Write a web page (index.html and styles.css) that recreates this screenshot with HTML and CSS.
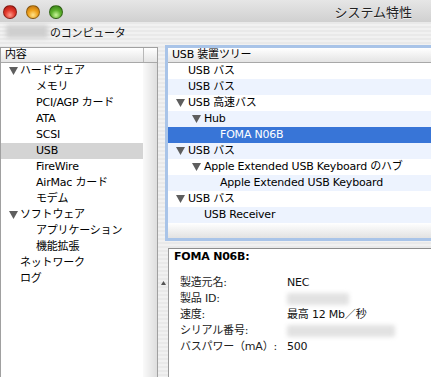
FILE: index.html
```html
<!DOCTYPE html>
<html lang="ja">
<head>
  <meta charset="UTF-8">
  <title>システム特性</title>
  <link rel="stylesheet" href="styles.css">
</head>
<body>
  <div class="window">
    <div class="titlebar">
      <div class="lights">
        <span class="light red"></span>
        <span class="light orange"></span>
        <span class="light green"></span>
      </div>
      <div class="title">システム特性</div>
    </div>
    <div class="toolbar">
      <span class="blur machine"></span>
      <span class="machine-label">のコンピュータ</span>
    </div>
    <div class="main">
      <div class="sidebar">
        <div class="side-head">
          <div class="side-col">内容</div>
          <div class="side-col2"></div>
        </div>
        <div class="side-body">
          <ul class="side-list">
            <li class="lv0"><span class="twisty"><svg width="9" height="8" viewBox="0 0 9 8"><path d="M0 0H9L4.5 8Z" fill="#5e5e5e"/></svg></span>ハードウェア</li>
            <li class="lv1">メモリ</li>
            <li class="lv1">PCI/AGP カード</li>
            <li class="lv1">ATA</li>
            <li class="lv1">SCSI</li>
            <li class="lv1 current">USB</li>
            <li class="lv1">FireWire</li>
            <li class="lv1">AirMac カード</li>
            <li class="lv1">モデム</li>
            <li class="lv0"><span class="twisty"><svg width="9" height="8" viewBox="0 0 9 8"><path d="M0 0H9L4.5 8Z" fill="#5e5e5e"/></svg></span>ソフトウェア</li>
            <li class="lv1">アプリケーション</li>
            <li class="lv1">機能拡張</li>
            <li class="lv0 leaf">ネットワーク</li>
            <li class="lv0 leaf">ログ</li>
          </ul>
          <div class="side-strip"></div>
        </div>
      </div>
      <div class="content">
        <div class="tree">
          <div class="tree-head">USB 装置ツリー</div>
          <ul class="tree-list">
            <li class="t0 leaf">USB バス</li>
            <li class="t0 leaf odd">USB バス</li>
            <li class="t0"><span class="twisty"><svg width="9" height="8" viewBox="0 0 9 8"><path d="M0 0H9L4.5 8Z" fill="#5e5e5e"/></svg></span>USB 高速バス</li>
            <li class="t1 odd"><span class="twisty"><svg width="9" height="8" viewBox="0 0 9 8"><path d="M0 0H9L4.5 8Z" fill="#5e5e5e"/></svg></span>Hub</li>
            <li class="t2 leaf selected">FOMA N06B</li>
            <li class="t0 odd"><span class="twisty"><svg width="9" height="8" viewBox="0 0 9 8"><path d="M0 0H9L4.5 8Z" fill="#5e5e5e"/></svg></span>USB バス</li>
            <li class="t1"><span class="twisty"><svg width="9" height="8" viewBox="0 0 9 8"><path d="M0 0H9L4.5 8Z" fill="#5e5e5e"/></svg></span>Apple Extended USB Keyboard のハブ</li>
            <li class="t2 leaf odd">Apple Extended USB Keyboard</li>
            <li class="t0"><span class="twisty"><svg width="9" height="8" viewBox="0 0 9 8"><path d="M0 0H9L4.5 8Z" fill="#5e5e5e"/></svg></span>USB バス</li>
            <li class="t1 leaf odd">USB Receiver</li>
          </ul>
          <div class="tree-fill"></div>
        </div>
        <div class="detail-row">
          <div class="grip"><svg width="5" height="4" viewBox="0 0 5 4"><path d="M0 4L2.5 0L5 4Z" fill="#555"/></svg></div>
          <div class="detail">
            <div class="detail-title">FOMA N06B:</div>
            <div class="props">
              <div class="prop"><span class="key">製造元名:</span><span class="val">NEC</span></div>
              <div class="prop"><span class="key">製品 ID:</span><span class="val"><span class="blur pid"></span></span></div>
              <div class="prop"><span class="key">速度:</span><span class="val">最高 12 Mb／秒</span></div>
              <div class="prop"><span class="key">シリアル番号:</span><span class="val"><span class="blur serial"></span></span></div>
              <div class="prop"><span class="key">バスパワー（mA）:</span><span class="val">500</span></div>
            </div>
          </div>
        </div>
      </div>
    </div>
  </div>
</body>
</html>
```

FILE: styles.css
```css
body {
  margin: 0;
  font-family: "DejaVu Sans", "Noto Sans CJK JP", sans-serif;
  font-size: 11px;
  letter-spacing: -0.2px;
  color: #000;
}
.window {
  width: 431px;
  height: 377px;
  overflow: hidden;
  display: flex;
  flex-direction: column;
  background: repeating-linear-gradient(#f1f1f1 0 2px, #e9e9e9 2px 4px);
}
.titlebar {
  height: 22px;
  flex: none;
  display: flex;
  align-items: center;
  justify-content: space-between;
  background: linear-gradient(#e6e6e6, #d0d0d0);
}
.lights {
  display: flex;
  gap: 9px;
  padding-left: 3px;
  padding-top: 1px;
}
.light {
  width: 14px;
  height: 14px;
  border-radius: 50%;
  box-sizing: border-box;
  border: 1px solid rgba(0,0,0,0.35);
}
.light.red {
  background: radial-gradient(circle at 50% 75%, #ff9a8a 0, #e2382b 45%, #a8160e 100%);
}
.light.orange {
  background: radial-gradient(circle at 50% 75%, #ffe38a 0, #f0a21c 45%, #b0660a 100%);
}
.light.green {
  background: radial-gradient(circle at 50% 75%, #c8f59a 0, #5cb02c 45%, #2f7410 100%);
}
.title {
  font-size: 13px;
  letter-spacing: 0;
  color: #222;
  padding-right: 19px;
  text-shadow: 0 1px 0 rgba(255,255,255,0.6);
}
.toolbar {
  height: 25px;
  flex: none;
  display: flex;
  align-items: center;
  box-sizing: border-box;
  padding: 0 0 6px 6px;
}
.machine-label {
  color: #111;
  margin-left: 2px;
}
.blur {
  display: inline-block;
  background: #cfcfcf;
  filter: blur(2px);
  border-radius: 2px;
}
.blur.machine {
  width: 42px;
  height: 13px;
}
.main {
  flex: 1;
  display: flex;
  min-height: 0;
}
.sidebar {
  width: 156px;
  flex: none;
  border: 1px solid #a0a0a0;
  border-bottom: none;
  background: #fff;
  display: flex;
  flex-direction: column;
}
.side-head {
  display: flex;
  height: 14px;
  border-bottom: 1px solid #a8a8a8;
  background: linear-gradient(#ffffff, #e4e4e4);
}
.side-col {
  width: 138px;
  padding-left: 4px;
  border-right: 1px solid #b8b8b8;
  line-height: 14px;
}
.side-col2 {
  flex: 1;
}
.side-body {
  flex: 1;
  display: flex;
}
.side-list {
  list-style: none;
  margin: 0;
  padding: 0;
  width: 142px;
}
.side-list li,
.tree-list li {
  height: 16px;
  line-height: 16px;
  display: flex;
  align-items: center;
  white-space: nowrap;
}
.twisty {
  display: inline-flex;
  align-items: center;
}
.side-list .twisty {
  width: 11px;
}
.side-list .lv0 {
  padding-left: 8px;
}
.side-list .lv0.leaf {
  padding-left: 19px;
}
.side-list .lv1 {
  padding-left: 35px;
}
.side-list .current {
  background: #d4d4d4;
}
.side-strip {
  flex: 1;
  background: linear-gradient(90deg, #fafafa, #dedede);
}
.content {
  flex: 1;
  display: flex;
  flex-direction: column;
  min-width: 0;
}
.tree {
  margin: -2px -4px 0 7px;
  border: 3px solid #a9c4e8;
  background: #fff;
  display: flex;
  flex-direction: column;
  height: 190px;
  flex: none;
}
.tree-head {
  height: 14px;
  line-height: 14px;
  padding-left: 4px;
  border-bottom: 1px solid #a8a8a8;
  background: linear-gradient(#ffffff, #e4e4e4);
}
.tree-list {
  list-style: none;
  margin: 0;
  padding: 0;
}
.tree-list .twisty {
  width: 12px;
}
.tree-list .odd {
  background: #edf3fe;
}
.tree-list .t0 {
  padding-left: 8px;
}
.tree-list .t0.leaf {
  padding-left: 20px;
}
.tree-list .t1 {
  padding-left: 24px;
}
.tree-list .t1.leaf {
  padding-left: 36px;
}
.tree-list .t2.leaf {
  padding-left: 52px;
}
.tree-list .selected {
  background: #3875d7;
  color: #fff;
}
.tree-fill {
  flex: 1;
  background: linear-gradient(#ffffff, #e2e2e2);
}
.detail-row {
  flex: 1;
  display: flex;
  margin-top: 7px;
}
.grip {
  width: 10px;
  padding-top: 33px;
  display: flex;
  justify-content: center;
  align-items: flex-start;
}
.detail {
  flex: 1;
  background: #fff;
  border-top: 1px solid #8c8c8c;
  border-left: 1px solid #9a9a9a;
  padding-left: 5px;
}
.detail-title {
  font-weight: bold;
  line-height: 16px;
}
.props {
  margin-top: 10px;
  padding-left: 6px;
}
.prop {
  display: flex;
  height: 16px;
  line-height: 16px;
  align-items: center;
}
.key {
  width: 107px;
  color: #222;
}
.val {
  color: #111;
}
.blur.pid {
  width: 62px;
  height: 12px;
  background: #e2e2e2;
  vertical-align: middle;
}
.blur.serial {
  width: 108px;
  height: 12px;
  background: #e2e2e2;
  vertical-align: middle;
}
```
